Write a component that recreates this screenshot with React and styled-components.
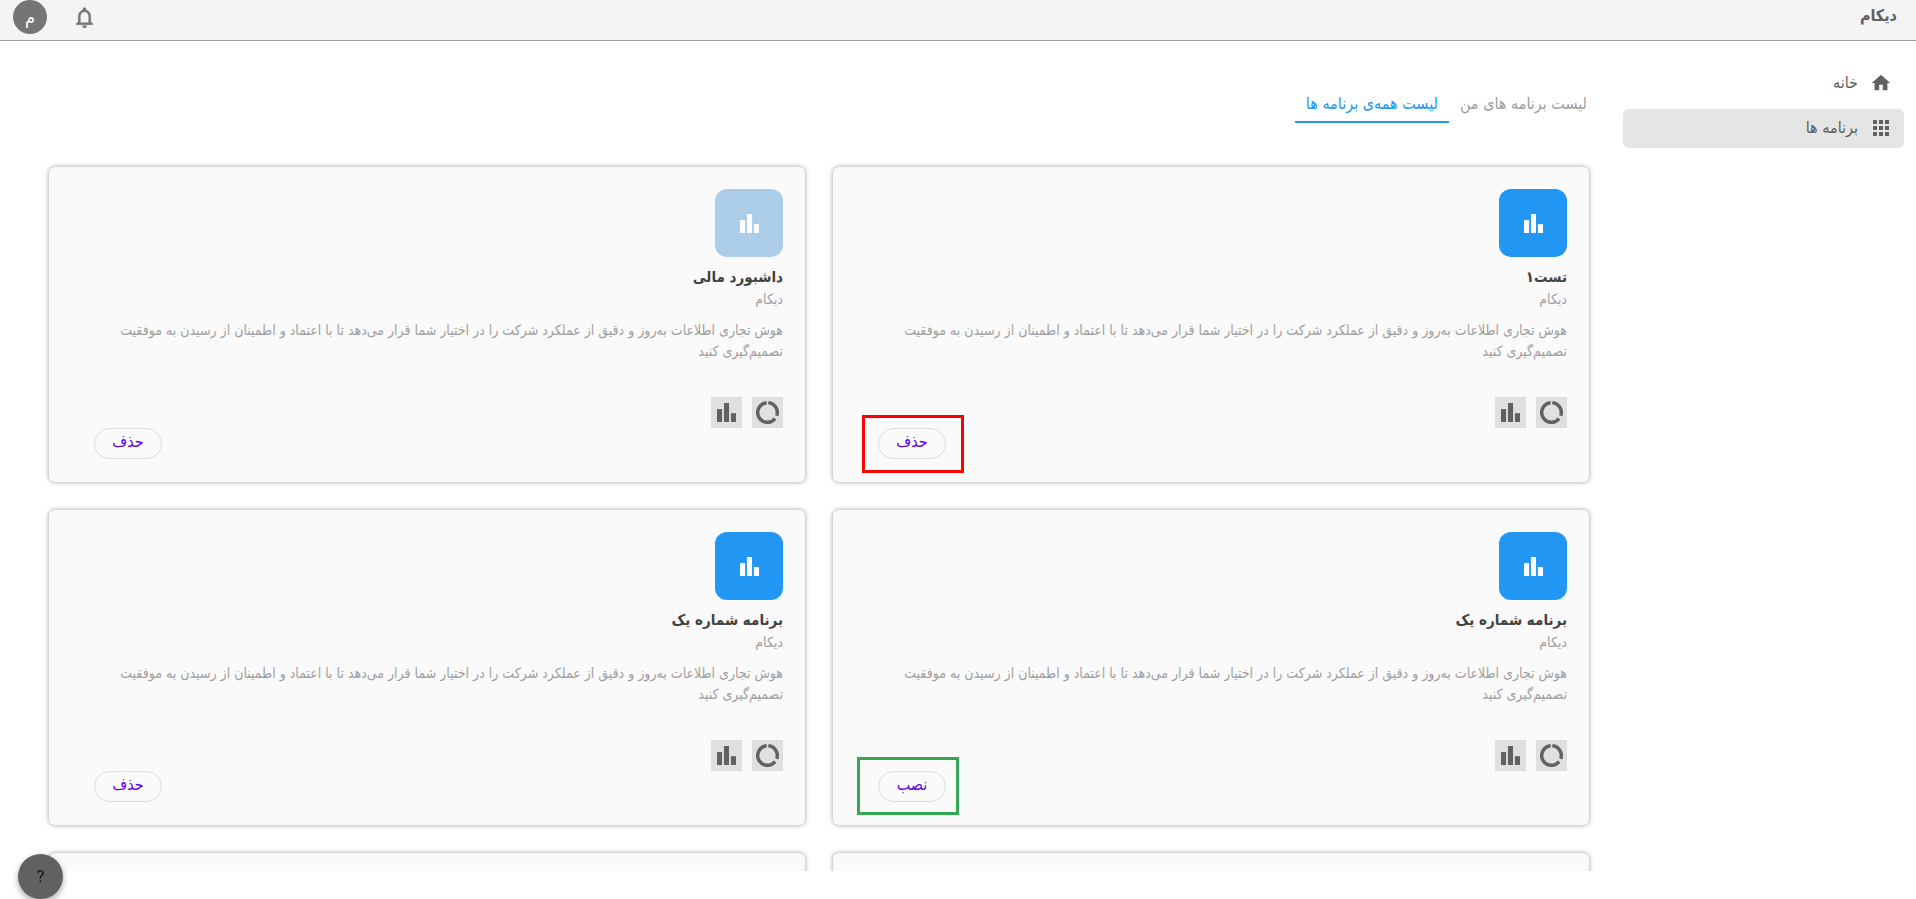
import React from 'react';
import styled, { createGlobalStyle } from 'styled-components';
import { MdApps, MdHome } from 'react-icons/md';

const DESCRIPTION =
  'هوش تجاری اطلاعات به‌روز و دقیق از عملکرد شرکت را در اختیار شما قرار می‌دهد تا با اعتماد و اطمینان از رسیدن به موفقیت تصمیم‌گیری کنید';

const apps = [
  { id: 1, title: 'تست۱', action: 'حذف', mark: 'remove' },
  { id: 2, title: 'داشبورد مالی', action: 'حذف', faded: true },
  { id: 3, title: 'برنامه شماره یک', action: 'نصب', mark: 'install' },
  { id: 4, title: 'برنامه شماره یک', action: 'حذف' },
  { id: 5, title: 'برنامه شماره یک', action: 'حذف' },
  { id: 6, title: 'برنامه شماره یک', action: 'حذف' },
];

function Bell() {
  return (
    <svg width="25" height="25" viewBox="0 0 24 24" fill="currentColor" aria-hidden="true">
      <path
        stroke="currentColor"
        strokeWidth="0.4"
        d="M12 22c1.1 0 2-.9 2-2h-4c0 1.1.9 2 2 2zm6-6v-5c0-3.07-1.63-5.64-4.5-6.32V4c0-.83-.67-1.5-1.5-1.5s-1.5.67-1.5 1.5v.68C7.64 5.36 6 7.92 6 11v5l-2 2v1h16v-1l-2-2zm-2 1H8v-6c0-2.48 1.51-4.5 4-4.5s4 2.02 4 4.5v6z"
      />
    </svg>
  );
}

function Bars() {
  return (
    <svg width="19" height="19" viewBox="0 0 56 56" fill="currentColor" aria-hidden="true">
      <rect x="0" y="18" width="15" height="38" />
      <rect x="20.5" y="0" width="15" height="56" />
      <rect x="41" y="30" width="15" height="26" />
    </svg>
  );
}

function Ring() {
  return (
    <svg width="23" height="23" viewBox="0 0 68 68" fill="none" stroke="currentColor" strokeWidth="10" aria-hidden="true">
      <path d="M36.5 5.1A29 29 0 0 1 61.2 44" />
      <path d="M56.6 52.3A29 29 0 1 1 31.5 5.1" />
    </svg>
  );
}

function AppCard({ app }) {
  return (
    <Card>
      <AppIcon $faded={app.faded}>
        <Bars />
      </AppIcon>
      <AppTitle>{app.title}</AppTitle>
      <Vendor>دیکام</Vendor>
      <Description>{DESCRIPTION}</Description>
      <Tools>
        <Tool>
          <Ring />
        </Tool>
        <Tool>
          <Bars />
        </Tool>
      </Tools>
      <Actions>
        <ActionSlot>
          <ActionButton type="button">{app.action}</ActionButton>
          {app.mark && <Marker $kind={app.mark} />}
        </ActionSlot>
      </Actions>
    </Card>
  );
}

export default function App() {
  return (
    <Page dir="rtl" lang="fa">
      <GlobalStyle />
      <Header>
        <Brand>دیکام</Brand>
        <HeaderTools>
          <IconButton type="button" aria-label="اعلان‌ها">
            <Bell />
          </IconButton>
          <Avatar type="button">م</Avatar>
        </HeaderTools>
      </Header>
      <Body>
        <Sidebar>
          <NavLink href="#home">
            <MdHome size={22} />
            خانه
          </NavLink>
          <NavLink href="#apps" $active>
            <MdApps size={24} />
            برنامه ها
          </NavLink>
        </Sidebar>
        <Main>
          <Tabs role="tablist">
            <Tab type="button" role="tab" aria-selected="false">
              لیست برنامه های من
            </Tab>
            <Tab type="button" role="tab" aria-selected="true" $active>
              لیست همه‌ی برنامه ها
            </Tab>
          </Tabs>
          <Grid>
            {apps.map((app) => (
              <AppCard app={app} key={app.id} />
            ))}
          </Grid>
        </Main>
      </Body>
      <HelpButton type="button">?</HelpButton>
    </Page>
  );
}

const GlobalStyle = createGlobalStyle`
  * {
    box-sizing: border-box;
  }

  body {
    margin: 0;
    background-color: #ffffff;
  }

  body,
  button {
    font-family: 'DejaVu Sans Condensed', 'DejaVu Sans', sans-serif;
  }
`;

const Page = styled.div`
  display: flex;
  flex-direction: column;
  height: 100vh;
  overflow: hidden;
`;

const Header = styled.header`
  display: flex;
  flex: none;
  align-items: center;
  justify-content: space-between;
  padding: 0 19px 6px 13px;
  background-color: #f4f4f4;
  border-bottom: 1px solid #9e9e9e;
`;

const Brand = styled.div`
  padding-bottom: 2px;
  font-size: 16px;
  font-weight: bold;
  line-height: 32px;
  color: #616161;
`;

const HeaderTools = styled.div`
  display: flex;
  align-items: center;
  gap: 25px;
`;

const IconButton = styled.button`
  display: flex;
  padding: 0;
  border: 0;
  background: none;
  color: #757575;
`;

const Avatar = styled.button`
  width: 34px;
  height: 34px;
  padding: 0;
  border: 0;
  border-radius: 50%;
  background-color: #757575;
  color: #ffffff;
  font-size: 18px;
`;

const Body = styled.div`
  display: flex;
  flex: 1;
  min-height: 0;
  padding: 0 12px 28px 0;
`;

const Sidebar = styled.nav`
  display: flex;
  flex: none;
  flex-direction: column;
  gap: 6px;
  width: 281px;
  padding-top: 23px;
`;

const NavLink = styled.a`
  display: flex;
  align-items: center;
  gap: 11px;
  height: 39px;
  padding: 0 11px 2px;
  border-radius: 6px;
  background-color: ${(props) => (props.$active ? '#e5e5e5' : 'transparent')};
  color: #616161;
  font-size: 16px;
  text-decoration: none;

  svg {
    width: 24px;
  }
`;

const Main = styled.main`
  flex: 1;
  min-width: 0;
  padding: 46px 34px 0 49px;
  overflow-y: auto;
  scrollbar-width: none;
`;

const Tabs = styled.div`
  display: flex;
  height: 36px;
  margin: 0 -9px 44px 0;
`;

const Tab = styled.button`
  padding: 0 11px 2px;
  border: 0;
  border-bottom: 2px solid ${(props) => (props.$active ? '#2196f3' : 'transparent')};
  background: none;
  color: ${(props) => (props.$active ? '#2196f3' : '#9e9e9e')};
  font-size: 16px;
`;

const Grid = styled.div`
  display: grid;
  grid-template-columns: 1fr 1fr;
  gap: 28px;
`;

const Card = styled.article`
  display: flex;
  flex-direction: column;
  padding: 22px 22px 23px;
  border-radius: 6px;
  background-color: #fafafa;
  box-shadow: 0 0 5px rgba(0, 0, 0, 0.4);
`;

const AppIcon = styled.div`
  display: flex;
  align-items: center;
  justify-content: center;
  width: 68px;
  height: 68px;
  border-radius: 12px;
  background-color: ${(props) => (props.$faded ? '#accde8' : '#2196f3')};
  color: #ffffff;
`;

const AppTitle = styled.h2`
  margin: 7px 0 0;
  font-size: 15px;
  line-height: 26px;
  color: #424242;
`;

const Vendor = styled.div`
  font-size: 14px;
  line-height: 18px;
  color: #9e9e9e;
`;

const Description = styled.p`
  margin: 12px 0 35px;
  padding-left: 22px;
  font-size: 14px;
  line-height: 21px;
  color: #9e9e9e;
`;

const Tools = styled.div`
  display: flex;
  gap: 10px;
`;

const Tool = styled.div`
  display: flex;
  align-items: center;
  justify-content: center;
  width: 31px;
  height: 31px;
  background-color: #e0e0e0;
  color: #616161;
`;

const Actions = styled.div`
  display: flex;
  justify-content: flex-end;
  padding-left: 23px;
`;

const ActionSlot = styled.div`
  position: relative;
`;

const ActionButton = styled.button`
  display: block;
  width: 68px;
  height: 31px;
  padding: 0 0 4px;
  border: 1px solid #dddddd;
  border-radius: 16px;
  background: none;
  color: #6200ee;
  font-size: 16px;
`;

const Marker = styled.div`
  position: absolute;
  top: ${(props) => (props.$kind === 'install' ? '-14px' : '-13px')};
  left: ${(props) => (props.$kind === 'install' ? '-21px' : '-16px')};
  width: 102px;
  height: 58px;
  border: 3px solid ${(props) => (props.$kind === 'install' ? '#34a853' : '#ff0000')};
  pointer-events: none;
`;

const HelpButton = styled.button`
  position: fixed;
  bottom: 0;
  left: 18px;
  width: 45px;
  height: 45px;
  padding: 0;
  border: 0;
  border-radius: 50%;
  background-color: #616161;
  box-shadow: 0 3px 6px rgba(0, 0, 0, 0.35);
  color: #111111;
  font-family: Roboto, sans-serif;
  font-size: 16px;
`;
